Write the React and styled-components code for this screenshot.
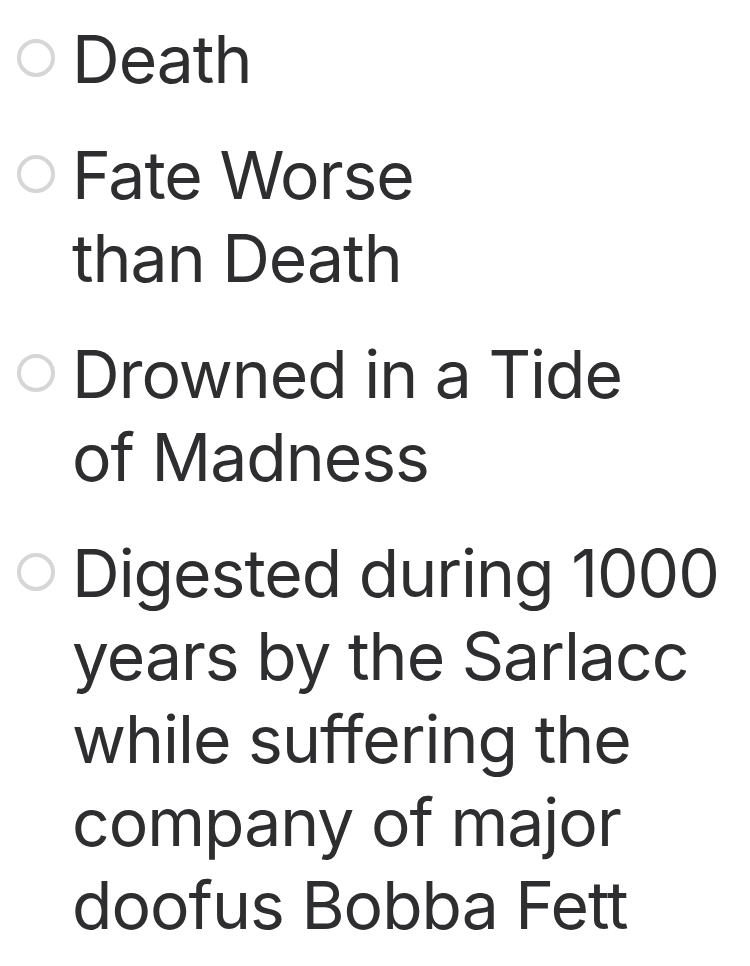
import React, { useState } from 'react';
import styled, { createGlobalStyle } from 'styled-components';

const GlobalStyle = createGlobalStyle`
  html, body {
    margin: 0;
    padding: 0;
    background: #fff;
  }
  * { box-sizing: border-box; }
`;

const options = [
  { id: 'death', lines: ['Death'] },
  { id: 'fate', lines: ['Fate Worse', 'than Death'] },
  { id: 'madness', lines: ['Drowned in a Tide', 'of Madness'] },
  {
    id: 'sarlacc',
    lines: [
      'Digested during 1000',
      'years by the Sarlacc',
      'while suffering the',
      'company of major',
      'doofus Bobba Fett',
    ],
  },
];

const App = () => {
  const [selected, setSelected] = useState(null);

  return (
    <>
      <GlobalStyle />
      <Group role="radiogroup">
        {options.map((opt) => (
          <Option key={opt.id} onClick={() => setSelected(opt.id)}>
            <Radio checked={selected === opt.id} />
            <Label>
              {opt.lines.map((line, i) => (
                <Line key={i}>{line}</Line>
              ))}
            </Label>
          </Option>
        ))}
      </Group>
    </>
  );
};

export default App;

const Group = styled.div`
  display: flex;
  flex-direction: column;
  gap: 33px;
  padding: 18px 0 0 17px;
  font-family: Inter, "Noto Sans", sans-serif;
  color: #2e2e31;
`;

const Option = styled.label`
  display: flex;
  align-items: flex-start;
  gap: 17px;
  cursor: pointer;
`;

const Radio = styled.span`
  flex: none;
  width: 38px;
  height: 38px;
  margin-top: 21px;
  border-radius: 50%;
  border: 4px solid ${(p) => (p.checked ? '#2e2e31' : '#d6d6d6')};
  background: #fff;
`;

const Label = styled.span`
  display: flex;
  flex-direction: column;
  font-size: 66px;
  line-height: 83px;
  letter-spacing: -1px;
`;

const Line = styled.span`
  white-space: nowrap;
`;
